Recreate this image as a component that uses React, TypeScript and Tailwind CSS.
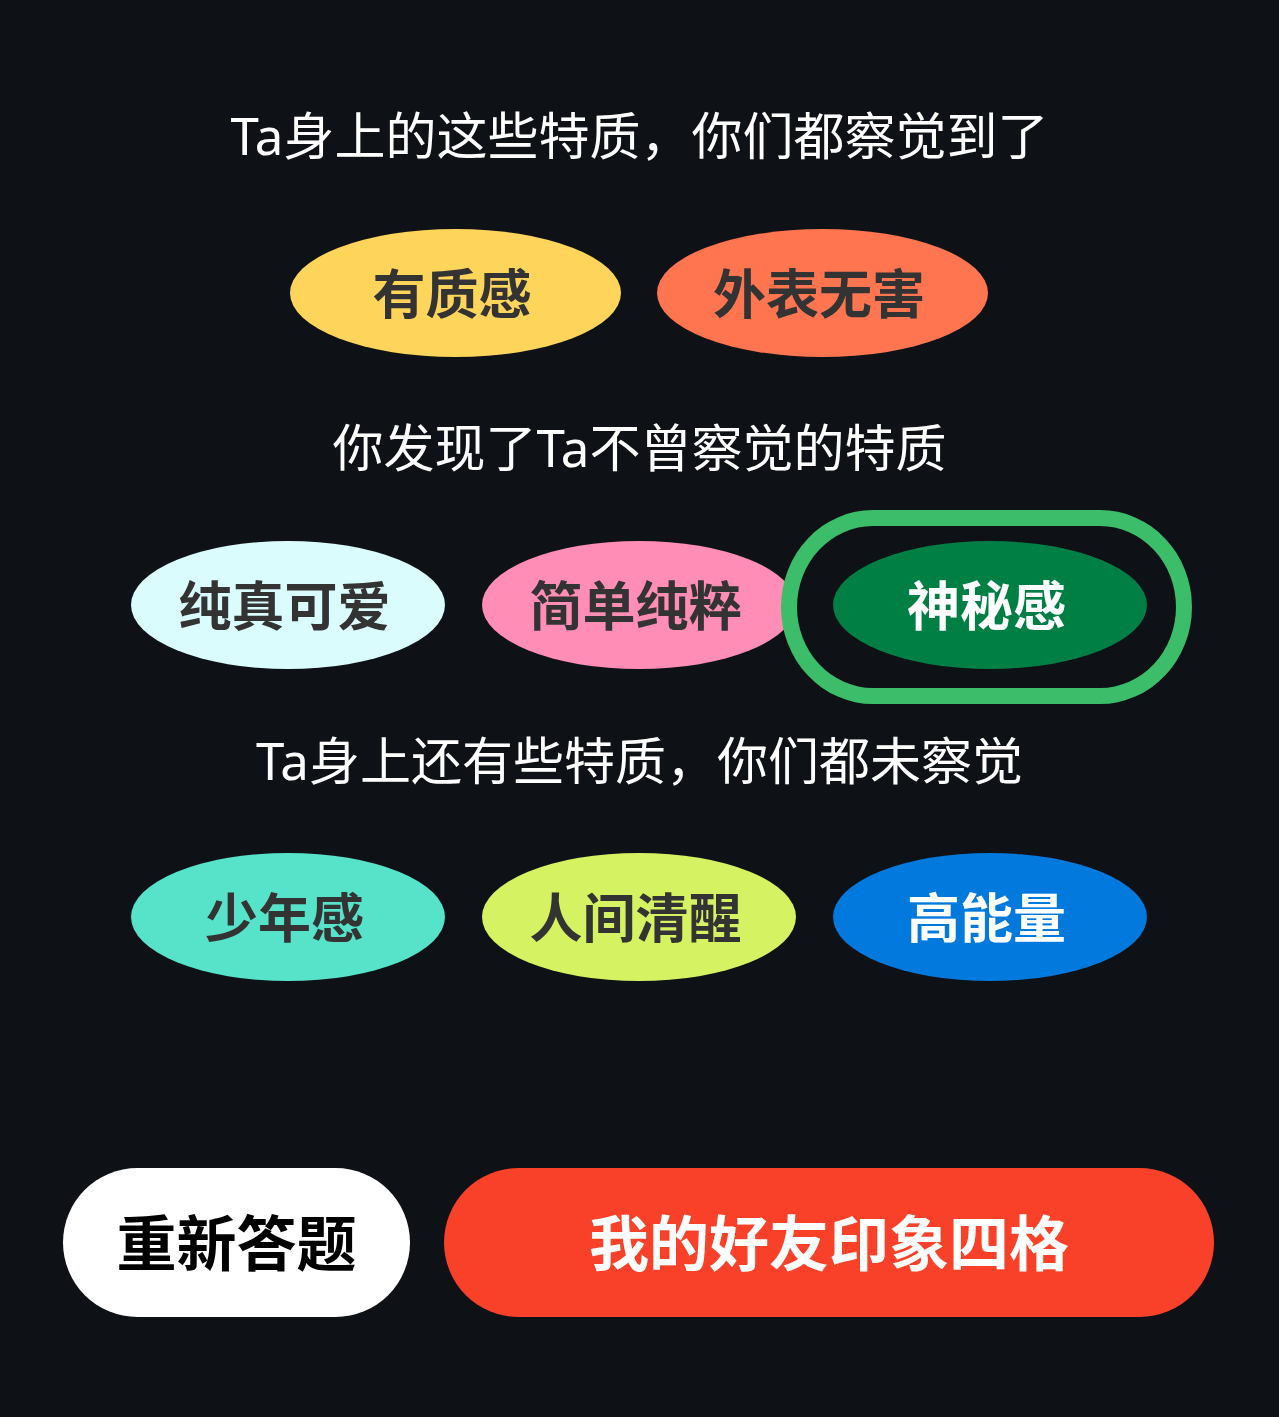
const font = "font-['Noto_Sans','Noto_Sans_CJK_SC',sans-serif]";

type Trait = { label: string; bg: string; text: string };

function Pill({ trait, wide }: { trait: Trait; wide?: boolean }) {
  return (
    <div
      className={`${wide ? 'w-[331px]' : 'w-[314px]'} h-[128px] rounded-[50%] flex items-center justify-center pr-[6px] ${trait.bg}`}
    >
      <span className={`text-[53px] font-bold leading-none ${trait.text}`}>{trait.label}</span>
    </div>
  );
}

export default function App() {
  const known: Trait[] = [
    { label: '有质感', bg: 'bg-[#fed45a]', text: 'text-[#333333]' },
    { label: '外表无害', bg: 'bg-[#ff7550]', text: 'text-[#333333]' }
  ];
  const found: Trait[] = [
    { label: '纯真可爱', bg: 'bg-[#dafcfd]', text: 'text-[#333333]' },
    { label: '简单纯粹', bg: 'bg-[#ff8db6]', text: 'text-[#333333]' }
  ];
  const selected: Trait = { label: '神秘感', bg: 'bg-[#007f45]', text: 'text-white' };
  const hidden: Trait[] = [
    { label: '少年感', bg: 'bg-[#56e3ca]', text: 'text-[#333333]' },
    { label: '人间清醒', bg: 'bg-[#d5f262]', text: 'text-[#333333]' },
    { label: '高能量', bg: 'bg-[#0279dd]', text: 'text-white' }
  ];

  return (
    <div className={`h-[1417px] bg-[#0e1115] flex flex-col ${font}`}>
      <div className="pt-[105px] flex flex-col items-center">
        <h2 className="h-[60px] leading-[60px] text-[51px] text-white">Ta身上的这些特质，你们都察觉到了</h2>

        <div className="mt-[64px] flex gap-[36px] pr-[2px]">
          {known.map(t => (
            <Pill key={t.label} trait={t} wide />
          ))}
        </div>

        <h2 className="mt-[60px] h-[60px] leading-[60px] text-[51px] text-white">你发现了Ta不曾察觉的特质</h2>

        <div className="mt-[64px] flex gap-[37px] pr-[2px]">
          {found.map(t => (
            <Pill key={t.label} trait={t} />
          ))}
          <div className="relative">
            <div className="absolute top-[-31px] bottom-[-35px] left-[-52px] right-[-45px] border-[16px] border-[#3cbd6a] rounded-[92px_/_97px]" />
            <Pill trait={selected} />
          </div>
        </div>

        <h2 className="mt-[61px] h-[60px] leading-[60px] text-[51px] text-white">Ta身上还有些特质，你们都未察觉</h2>

        <div className="mt-[63px] flex gap-[37px] pr-[2px]">
          {hidden.map(t => (
            <Pill key={t.label} trait={t} />
          ))}
        </div>
      </div>

      <div className="mt-[187px] pl-[63px] pr-[65px] flex gap-[34px]">
        <button className="w-[347px] h-[149px] rounded-full bg-white text-black text-[60px] font-bold leading-none">
          重新答题
        </button>
        <button className="flex-1 h-[149px] rounded-full bg-[#f84128] text-white text-[60px] font-bold leading-none">
          我的好友印象四格
        </button>
      </div>
    </div>
  );
}
